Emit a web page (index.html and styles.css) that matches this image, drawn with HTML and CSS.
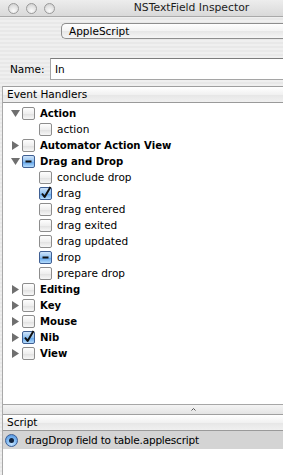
FILE: index.html
```html
<!DOCTYPE html>
<html lang="en">
<head>
    <meta charset="UTF-8">
    <title>NSTextField Inspector</title>
    <link rel="stylesheet" href="styles.css">
</head>
<body>
    <div class="window">
        <div class="titlebar">
            <div class="lights">
                <span class="light"></span>
                <span class="light"></span>
                <span class="light"></span>
            </div>
            <div class="title">NSTextField Inspector</div>
        </div>

        <div class="content">
            <div class="popup">AppleScript</div>

            <div class="name-row">
                <label>Name:</label>
                <div class="field">In</div>
            </div>

            <div class="pane">
                <div class="col-head">Event Handlers</div>
                <div class="outline">
                    <div class="row group">
                        <svg class="tri" viewBox="0 0 9 9"><polygon points="0,1 9,1 4.5,8"/></svg>
                        <span class="cb"></span>
                        <span class="lbl">Action</span>
                    </div>
                    <div class="row child">
                        <span class="cb"></span>
                        <span class="lbl">action</span>
                    </div>
                    <div class="row group">
                        <svg class="tri" viewBox="0 0 9 9"><polygon points="1,0 8,4.5 1,9"/></svg>
                        <span class="cb"></span>
                        <span class="lbl">Automator Action View</span>
                    </div>
                    <div class="row group">
                        <svg class="tri" viewBox="0 0 9 9"><polygon points="0,1 9,1 4.5,8"/></svg>
                        <span class="cb mixed"><svg viewBox="0 0 11 11"><rect x="2.5" y="4.5" width="6" height="2"/></svg></span>
                        <span class="lbl">Drag and Drop</span>
                    </div>
                    <div class="row child">
                        <span class="cb"></span>
                        <span class="lbl">conclude drop</span>
                    </div>
                    <div class="row child">
                        <span class="cb on"><svg viewBox="0 0 11 11"><path d="M2 5.5 L4.6 9 L10.5 -1"/></svg></span>
                        <span class="lbl">drag</span>
                    </div>
                    <div class="row child">
                        <span class="cb"></span>
                        <span class="lbl">drag entered</span>
                    </div>
                    <div class="row child">
                        <span class="cb"></span>
                        <span class="lbl">drag exited</span>
                    </div>
                    <div class="row child">
                        <span class="cb"></span>
                        <span class="lbl">drag updated</span>
                    </div>
                    <div class="row child">
                        <span class="cb mixed"><svg viewBox="0 0 11 11"><rect x="2.5" y="4.5" width="6" height="2"/></svg></span>
                        <span class="lbl">drop</span>
                    </div>
                    <div class="row child">
                        <span class="cb"></span>
                        <span class="lbl">prepare drop</span>
                    </div>
                    <div class="row group">
                        <svg class="tri" viewBox="0 0 9 9"><polygon points="1,0 8,4.5 1,9"/></svg>
                        <span class="cb"></span>
                        <span class="lbl">Editing</span>
                    </div>
                    <div class="row group">
                        <svg class="tri" viewBox="0 0 9 9"><polygon points="1,0 8,4.5 1,9"/></svg>
                        <span class="cb"></span>
                        <span class="lbl">Key</span>
                    </div>
                    <div class="row group">
                        <svg class="tri" viewBox="0 0 9 9"><polygon points="1,0 8,4.5 1,9"/></svg>
                        <span class="cb"></span>
                        <span class="lbl">Mouse</span>
                    </div>
                    <div class="row group">
                        <svg class="tri" viewBox="0 0 9 9"><polygon points="1,0 8,4.5 1,9"/></svg>
                        <span class="cb on"><svg viewBox="0 0 11 11"><path d="M2 5.5 L4.6 9 L10.5 -1"/></svg></span>
                        <span class="lbl">Nib</span>
                    </div>
                    <div class="row group">
                        <svg class="tri" viewBox="0 0 9 9"><polygon points="1,0 8,4.5 1,9"/></svg>
                        <span class="cb"></span>
                        <span class="lbl">View</span>
                    </div>
                </div>

                <div class="splitter">
                    <svg viewBox="0 0 5 3"><path d="M0.5 2.5 L2.5 0.5 L4.5 2.5"/></svg>
                </div>

                <div class="col-head">Script</div>
                <div class="scripts">
                    <div class="script-row selected">
                        <span class="radio"><span class="dot"></span></span>
                        <span>dragDrop field to table.applescript</span>
                    </div>
                </div>
            </div>
        </div>
    </div>
</body>
</html>
```

FILE: styles.css
```css
html, body {
    margin: 0;
    padding: 0;
    width: 283px;
    height: 475px;
    overflow: hidden;
    background: #e9e9e9;
}
/* the panel is wider than the capture; its right part is cut off */
.window {
    width: 283px;
    height: 475px;
    overflow: hidden;
    display: flex;
    flex-direction: column;
    font-family: "DejaVu Sans", "Liberation Sans", sans-serif;
    font-size: 10.5px;
    color: #000;
    background: repeating-linear-gradient(#efefef 0 2px, #e8e8e8 2px 4px);
}
.titlebar {
    display: grid;
    height: 16px;
    border-bottom: 1px solid #a9a9a9;
    background: linear-gradient(#ededed, #d9d9d9);
}
.lights, .title {
    grid-area: 1 / 1;
}
.lights {
    display: flex;
    align-items: center;
    gap: 7px;
    padding-left: 8px;
    justify-self: start;
}
.light {
    width: 11px;
    height: 11px;
    box-sizing: border-box;
    border-radius: 50%;
    border: 1px solid #9a9a9a;
    background: radial-gradient(circle at 50% 75%, #fafafa 0%, #e2e2e2 55%, #c8c8c8 100%);
}
.title {
    justify-self: center;
    padding-left: 100px;
    line-height: 16px;
    font-size: 10.8px;
    color: #1c1c1c;
}
.content {
    flex: 1;
    display: flex;
    flex-direction: column;
}
.popup {
    margin: 6px 0 0 61px;
    height: 16px;
    box-sizing: border-box;
    border: 1px solid #8e8e8e;
    border-right: none;
    border-radius: 5px 0 0 5px;
    padding-left: 7px;
    line-height: 14px;
    background: linear-gradient(#ffffff, #f3f3f3 50%, #e6e6e6 51%, #f6f6f6);
}
.name-row {
    display: flex;
    align-items: center;
    margin-top: 19px;
    padding-left: 10px;
    height: 22px;
}
.name-row label {
    width: 40px;
}
.field {
    flex: 1;
    height: 22px;
    box-sizing: border-box;
    border: 1px solid #a5a5a5;
    border-top-color: #7c7c7c;
    border-right: none;
    background: #fff;
    padding-left: 4px;
    line-height: 20px;
}
.pane {
    flex: 1;
    margin: 6px 0 0 2px;
    border-left: 1px solid #a9a9a9;
    display: flex;
    flex-direction: column;
    background: #fff;
}
.col-head {
    height: 15px;
    line-height: 15px;
    padding-left: 4px;
    border-top: 1px solid #9f9f9f;
    border-bottom: 1px solid #9a9a9a;
    background: linear-gradient(#ffffff, #f1f1f1 50%, #e6e6e6 51%, #f0f0f0);
}
.outline {
    height: 299px;
    padding-top: 2px;
}
.row {
    display: flex;
    align-items: center;
    height: 16px;
    white-space: nowrap;
}
.row.group {
    padding-left: 8px;
    font-weight: bold;
    font-size: 10.1px;
}
.row.child {
    padding-left: 36px;
}
.tri {
    width: 9px;
    height: 9px;
    margin-right: 2px;
    fill: #6f6f6f;
    flex: none;
}
.cb {
    width: 13px;
    height: 13px;
    box-sizing: border-box;
    border: 1px solid #8d8d8d;
    border-radius: 2px;
    margin-right: 5px;
    flex: none;
    background: linear-gradient(#fefefe, #efefef 50%, #e0e0e0 51%, #f7f7f7);
}
.cb svg {
    width: 11px;
    height: 11px;
    overflow: visible;
    display: block;
}
.cb.on, .cb.mixed {
    border-color: #3f5f93;
    background: linear-gradient(#cfe4fa, #8ec0f0 50%, #5a9fe8 51%, #b5dcfc);
}
.cb.on path {
    fill: none;
    stroke: #111;
    stroke-width: 2;
    stroke-linejoin: round;
}
.cb.mixed rect {
    fill: #111;
}
.splitter {
    height: 9px;
    padding-left: 100px;
    border-top: 1px solid #a7a7a7;
    display: flex;
    justify-content: center;
    align-items: center;
    background: linear-gradient(#f4f4f4, #e4e4e4);
}
.splitter svg {
    width: 5px;
    height: 3px;
    fill: none;
    stroke: #555;
    stroke-width: 1;
}
.scripts {
    flex: 1;
}
.script-row {
    display: flex;
    align-items: center;
    height: 18px;
    padding-left: 2px;
    letter-spacing: -0.2px;
    white-space: nowrap;
}
.script-row.selected {
    background: #d4d4d4;
}
.radio {
    width: 13px;
    height: 13px;
    box-sizing: border-box;
    border-radius: 50%;
    border: 1px solid #3a5d94;
    margin-right: 7px;
    display: flex;
    align-items: center;
    justify-content: center;
    background: radial-gradient(circle at 50% 80%, #c4e3ff 0%, #79b4ef 55%, #4a8ad8 100%);
}
.dot {
    width: 5px;
    height: 5px;
    border-radius: 50%;
    background: #10233f;
}
```
